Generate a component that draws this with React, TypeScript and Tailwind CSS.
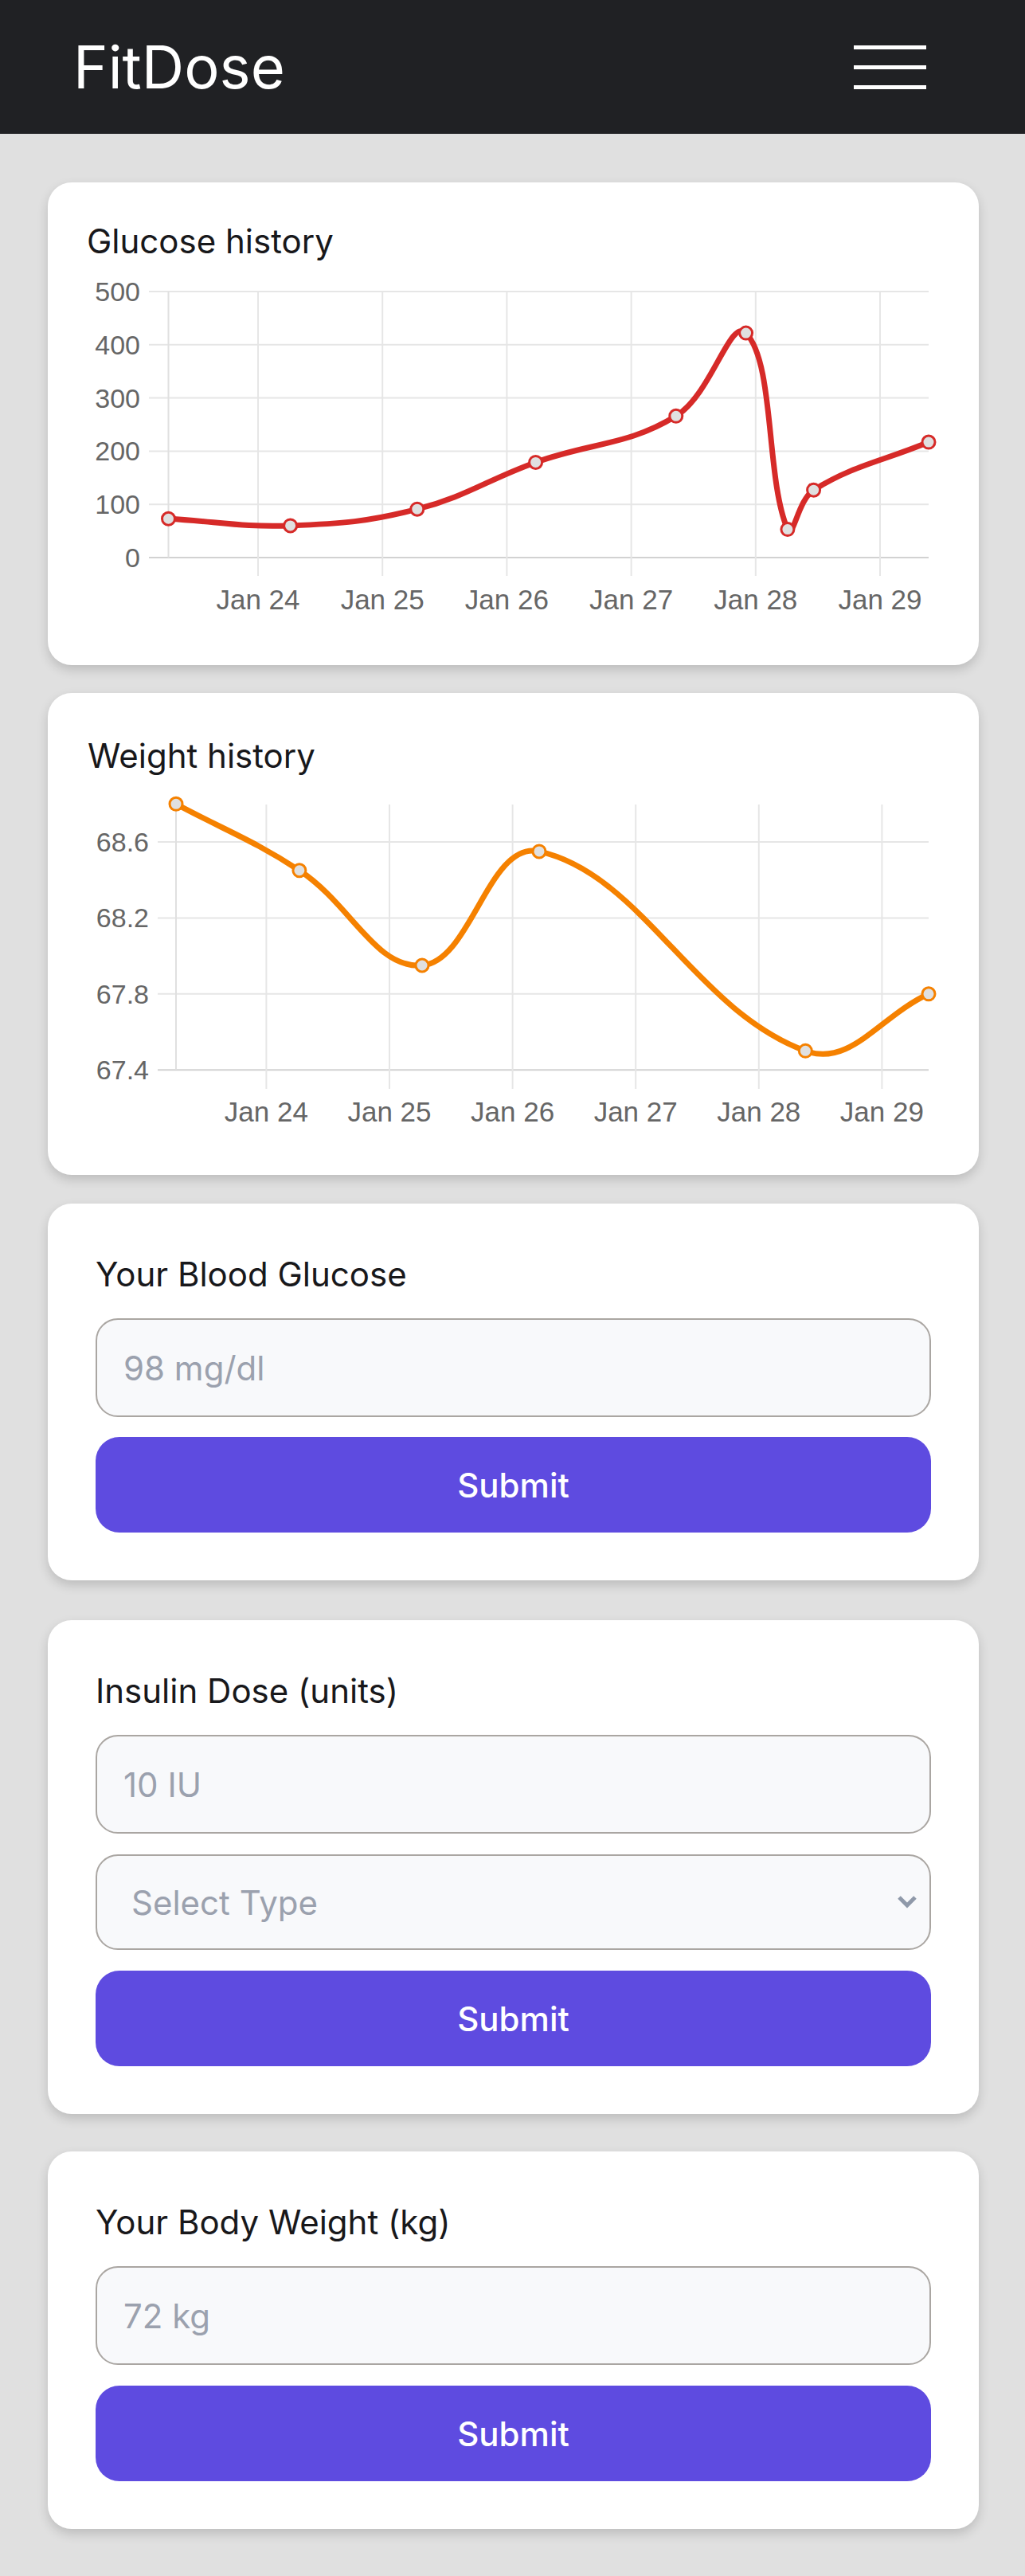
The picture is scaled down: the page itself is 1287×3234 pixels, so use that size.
import React from 'react';

type Pt = [number, number];

// Chart.js style spline (tension 0.4), control points clamped to the plot area
function splinePath(pts: Pt[], area: { l: number; r: number; t: number; b: number }, tension = 0.4) {
  const clamp = (v: number, lo: number, hi: number) => Math.max(lo, Math.min(hi, v));
  const cps = pts.map((p, i) => {
    const prev = pts[i - 1] ?? p;
    const next = pts[i + 1] ?? p;
    const d01 = Math.hypot(p[0] - prev[0], p[1] - prev[1]);
    const d12 = Math.hypot(next[0] - p[0], next[1] - p[1]);
    let s01 = d01 / (d01 + d12);
    let s12 = d12 / (d01 + d12);
    if (isNaN(s01)) s01 = 0;
    if (isNaN(s12)) s12 = 0;
    const fa = tension * s01;
    const fb = tension * s12;
    const c1: Pt = [clamp(p[0] - fa * (next[0] - prev[0]), area.l, area.r), clamp(p[1] - fa * (next[1] - prev[1]), area.t, area.b)];
    const c2: Pt = [clamp(p[0] + fb * (next[0] - prev[0]), area.l, area.r), clamp(p[1] + fb * (next[1] - prev[1]), area.t, area.b)];
    return { c1, c2 };
  });
  let d = `M${pts[0][0]},${pts[0][1]}`;
  for (let i = 1; i < pts.length; i++) {
    const a = cps[i - 1].c2;
    const b = cps[i].c1;
    d += ` C${a[0]},${a[1]} ${b[0]},${b[1]} ${pts[i][0]},${pts[i][1]}`;
  }
  return d;
}

interface ChartProps {
  height: number;
  offsetY: number; // page y of svg top
  offsetX: number; // page x of svg left
  yTicks: { label: string; y: number }[];
  xTicks: { label: string; x: number }[];
  axisX: number;
  gridLeft: number;
  right: number;
  top: number;
  bottom: number;
  tickBottom: number;
  labelRight: number;
  xLabelBaseline: number;
  points: Pt[];
  color: string;
}

function LineChart(p: ChartProps) {
  const ox = p.offsetX;
  const oy = p.offsetY;
  const pts: Pt[] = p.points.map(([x, y]) => [x - ox, y - oy]);
  const area = { l: p.axisX - ox, r: p.right - ox, t: p.top - oy, b: p.bottom - oy };
  const d = splinePath(pts, area);
  return (
    <svg className="block" width={1169} height={p.height} viewBox={`0 0 1169 ${p.height}`}>
      {/* horizontal grid */}
      {p.yTicks.map((t, i) => (
        <line
          key={'h' + i}
          x1={p.gridLeft - ox}
          x2={p.right - ox}
          y1={t.y - oy}
          y2={t.y - oy}
          stroke={i === p.yTicks.length - 1 ? '#d2d2d2' : '#e6e6e6'}
          strokeWidth={2}
        />
      ))}
      {/* vertical grid */}
      <line x1={p.axisX - ox} x2={p.axisX - ox} y1={p.top - oy} y2={p.bottom - oy} stroke="#e0e0e0" strokeWidth={2} />
      {p.xTicks.map((t, i) => (
        <line key={'v' + i} x1={t.x - ox} x2={t.x - ox} y1={p.top - oy} y2={p.tickBottom - oy} stroke="#e6e6e6" strokeWidth={2} />
      ))}
      {/* labels */}
      {p.yTicks.map((t, i) => (
        <text
          key={'yl' + i}
          x={p.labelRight - ox}
          y={t.y - oy + 12}
          textAnchor="end"
          fontSize={34}
          fill="#666666"
          fontFamily='"Liberation Sans", Arial, sans-serif'
        >
          {t.label}
        </text>
      ))}
      {p.xTicks.map((t, i) => (
        <text
          key={'xl' + i}
          x={t.x - ox}
          y={p.xLabelBaseline - oy}
          textAnchor="middle"
          fontSize={35}
          fill="#666666"
          fontFamily='"Liberation Sans", Arial, sans-serif'
        >
          {t.label}
        </text>
      ))}
      <path d={d} fill="none" stroke={p.color} strokeWidth={7} strokeLinejoin="round" />
      {pts.map(([x, y], i) => (
        <circle key={'p' + i} cx={x} cy={y} r={8} fill="#e0e0e0" stroke={p.color} strokeWidth={3} />
      ))}
    </svg>
  );
}

const days = ['Jan 24', 'Jan 25', 'Jan 26', 'Jan 27', 'Jan 28', 'Jan 29'];

function glucoseY(v: number) {
  return 700 - v * 0.668;
}

function weightY(v: number) {
  return 1057 + ((68.6 - v) / 0.4) * 95.4;
}

const inputCls =
  "block w-full h-[124px] rounded-[28px] border-2 border-[#aaa6a2] bg-[#f8f9fb] pl-[33px] text-[42px] text-[#1f2937] placeholder:text-[#9ba1ae] outline-none font-['Inter',sans-serif]";

function SubmitButton() {
  return (
    <button className="block w-full h-[120px] rounded-[30px] bg-[#5e4be0] text-[42px] font-medium text-white font-['Inter',sans-serif]">
      Submit
    </button>
  );
}

function FormLabel({ children }: { children: React.ReactNode }) {
  return <div className="h-[51px] text-[42px] leading-[51px] text-[#18181b] mb-[30px]">{children}</div>;
}

export default function App() {
  return (
    <div className="min-h-screen bg-[#e0e0e0] pb-[60px] font-['Inter',sans-serif]">
      {/* Header */}
      <header className="flex h-[168px] items-center justify-between bg-[#202124] pl-[92px] pr-[124px]">
        <span className="text-[74px] leading-[90px] text-white">FitDose</span>
        <div className="flex w-[91px] flex-col gap-[20px]">
          <span className="block h-[5px] w-full bg-white" />
          <span className="block h-[5px] w-full bg-white" />
          <span className="block h-[5px] w-full bg-white" />
        </div>
      </header>

      {/* Glucose history */}
      <section className="ml-[60px] mr-[58px] mt-[61px] h-[606px] rounded-[30px] bg-white shadow-[0_6px_14px_rgba(0,0,0,0.16)]">
        <h2 className="pl-[49px] pt-[48px] text-[42px] leading-[51px] font-normal text-[#18181b]">Glucose history</h2>
        <LineChart
          height={507}
          offsetX={60}
          offsetY={328}
          yTicks={[500, 400, 300, 200, 100, 0].map((v) => ({ label: String(v), y: glucoseY(v) }))}
          xTicks={days.map((l, i) => ({ label: l, x: 324 + i * 156.2 }))}
          axisX={211.5}
          gridLeft={187}
          right={1166}
          top={366}
          bottom={700}
          tickBottom={723}
          labelRight={176}
          xLabelBaseline={765}
          color="#d62a28"
          points={[
            [211.5, glucoseY(73)],
            [364.6, glucoseY(60)],
            [523.8, glucoseY(91)],
            [672.6, glucoseY(179)],
            [848.8, glucoseY(266)],
            [936.6, glucoseY(422)],
            [988.9, glucoseY(53)],
            [1021.6, glucoseY(127)],
            [1166, glucoseY(217)],
          ]}
        />
      </section>

      {/* Weight history */}
      <section className="ml-[60px] mr-[58px] mt-[35px] h-[605px] rounded-[30px] bg-white shadow-[0_6px_14px_rgba(0,0,0,0.16)]">
        <h2 className="pl-[50px] pt-[53px] text-[42px] leading-[51px] font-normal text-[#18181b]">Weight history</h2>
        <LineChart
          height={501}
          offsetX={60}
          offsetY={974}
          yTicks={['68.6', '68.2', '67.8', '67.4'].map((l) => ({ label: l, y: weightY(parseFloat(l)) }))}
          xTicks={days.map((l, i) => ({ label: l, x: 334.4 + i * 154.6 }))}
          axisX={221}
          gridLeft={198}
          right={1166}
          top={1010}
          bottom={1343}
          tickBottom={1367}
          labelRight={187}
          xLabelBaseline={1408}
          color="#f58100"
          points={[
            [221, weightY(68.8)],
            [375.9, weightY(68.45)],
            [530, weightY(67.95)],
            [677, weightY(68.55)],
            [1011.3, weightY(67.5)],
            [1166, weightY(67.8)],
          ]}
        />
      </section>

      {/* Blood glucose form */}
      <section className="ml-[60px] mr-[58px] mt-[36px] rounded-[30px] bg-white px-[60px] pt-[63px] pb-[60px] shadow-[0_6px_14px_rgba(0,0,0,0.16)]">
        <FormLabel>Your Blood Glucose</FormLabel>
        <input className={inputCls} placeholder="98 mg/dl" />
        <div className="mt-[25px]">
          <SubmitButton />
        </div>
      </section>

      {/* Insulin form */}
      <section className="ml-[60px] mr-[58px] mt-[50px] rounded-[30px] bg-white px-[60px] pt-[63px] pb-[60px] shadow-[0_6px_14px_rgba(0,0,0,0.16)]">
        <FormLabel>Insulin Dose (units)</FormLabel>
        <input className={inputCls} placeholder="10 IU" />
        <div className="relative mt-[26px]">
          <select
            defaultValue=""
            className="block h-[120px] w-full appearance-none rounded-[28px] border-2 border-[#aaa6a2] bg-[#f8f9fb] pl-[43px] text-[42px] text-[#9ba1ae] outline-none font-['Inter',sans-serif]"
          >
            <option value="" disabled>
              Select Type
            </option>
            <option value="rapid">Rapid-acting</option>
            <option value="long">Long-acting</option>
          </select>
          <svg
            className="pointer-events-none absolute right-[17px] top-[50%] -translate-y-1/2"
            width="26"
            height="18"
            viewBox="0 0 26 18"
          >
            <path d="M3 3 L13 13 L23 3" fill="none" stroke="#8f99a9" strokeWidth="5" />
          </svg>
        </div>
        <div className="mt-[26px]">
          <SubmitButton />
        </div>
      </section>

      {/* Body weight form */}
      <section className="ml-[60px] mr-[58px] mt-[47px] rounded-[30px] bg-white px-[60px] pt-[63px] pb-[60px] shadow-[0_6px_14px_rgba(0,0,0,0.16)]">
        <FormLabel>Your Body Weight (kg)</FormLabel>
        <input className={inputCls} placeholder="72 kg" />
        <div className="mt-[26px]">
          <SubmitButton />
        </div>
      </section>
    </div>
  );
}
